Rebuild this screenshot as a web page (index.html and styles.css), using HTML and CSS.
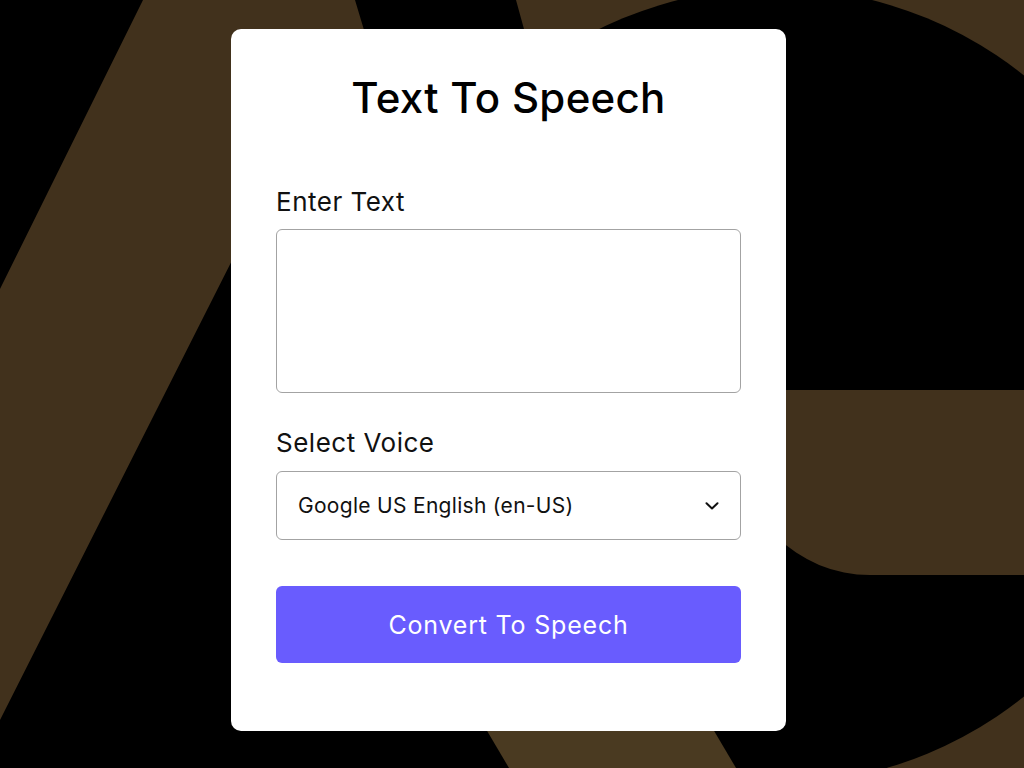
FILE: index.html
```html
<!DOCTYPE html>
<html lang="en">
<head>
<meta charset="utf-8">
<title>Text To Speech</title>
<link rel="stylesheet" href="styles.css">
</head>
<body>
<svg class="backdrop" viewBox="0 0 1024 768" preserveAspectRatio="none" aria-hidden="true">
  <polygon class="shape" points="143,0 355,0 370,50 260,205 0,720 0,289"/>
  <polygon class="shape" points="516,0 1024,0 1024,768 620,768 620,700 560,160"/>
  <circle class="hole" cx="775" cy="386" r="398"/>
  <path class="shape" d="M700,390 H1024 V575 H870 A133,133 0 0 1 737,442 V390 Z"/>
  <polygon class="shape light" points="457,680 684,680 736,768 509,768"/>
</svg>
<main class="page">
  <section class="card">
    <h1 class="title">Text To Speech</h1>
    <label class="label" for="text">Enter Text</label>
    <textarea id="text" class="textarea"></textarea>
    <label class="label label-voice" for="voice">Select Voice</label>
    <div class="select-wrap">
      <select id="voice" class="select">
        <option>Google US English (en-US)</option>
      </select>
      <svg class="chevron" viewBox="0 0 14 8" aria-hidden="true"><path d="M1.5 1.2 L7 6.5 L12.5 1.2"/></svg>
    </div>
    <button class="button" type="button">Convert To Speech</button>
  </section>
</main>
</body>
</html>
```
FILE: styles.css
```css
html, body {
  margin: 0;
  padding: 0;
  background: #000;
  height: 100%;
  overflow: hidden;
}

body {
  font-family: "Inter", "Noto Sans", sans-serif;
  color: #000;
}

.backdrop {
  position: fixed;
  left: 0;
  top: 0;
  width: 1024px;
  height: 768px;
  z-index: 0;
}

.shape {
  fill: #41311c;
}

.shape.light {
  fill: #4a3a21;
}

.hole {
  fill: #000;
}

.page {
  position: relative;
  z-index: 1;
  display: flex;
  justify-content: center;
  padding: 29px 7px 0 0;
}

.card {
  width: 555px;
  box-sizing: border-box;
  background: #fff;
  border-radius: 10px;
  padding: 44px 45px 68px;
  display: flex;
  flex-direction: column;
}

.title {
  margin: 0;
  font-size: 42px;
  line-height: 50px;
  font-weight: 500;
  text-align: center;
  letter-spacing: 0.3px;
}

.label {
  display: block;
  margin: 63px 0 11px;
  font-size: 26px;
  line-height: 32px;
  font-weight: 400;
  letter-spacing: 0.5px;
  color: #111;
}

.label-voice {
  margin-top: 34px;
  margin-bottom: 12px;
}

.textarea {
  display: block;
  box-sizing: border-box;
  width: 100%;
  height: 164px;
  margin: 0;
  border: 1px solid #a3a3a3;
  border-radius: 6px;
  resize: none;
  font: inherit;
  background: #fff;
}

.select-wrap {
  position: relative;
}

.select {
  display: block;
  box-sizing: border-box;
  width: 100%;
  height: 69px;
  margin: 0;
  padding: 0 50px 0 21px;
  border: 1px solid #a3a3a3;
  border-radius: 6px;
  background: #fff;
  appearance: none;
  -webkit-appearance: none;
  font-family: inherit;
  font-size: 21px;
  letter-spacing: 0.3px;
  color: #111;
}

.chevron {
  position: absolute;
  right: 22px;
  top: 31px;
  width: 14px;
  height: 8px;
  fill: none;
  stroke: #111;
  stroke-width: 2;
  stroke-linecap: round;
  stroke-linejoin: round;
  pointer-events: none;
}

.button {
  margin-top: 46px;
  height: 77px;
  border: none;
  border-radius: 6px;
  background: #695cfe;
  color: #fff;
  font-family: inherit;
  font-size: 25px;
  font-weight: 400;
  letter-spacing: 0.8px;
  cursor: pointer;
}
```
